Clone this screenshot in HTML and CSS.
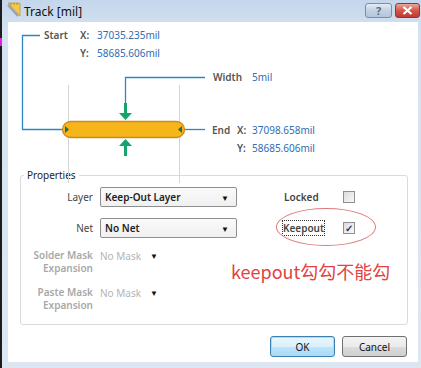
FILE: index.html
```html
<!DOCTYPE html>
<html lang="en">
<head>
    <meta charset="UTF-8">
    <title>Track [mil]</title>
    <link rel="stylesheet" href="styles.css">
</head>
<body>
    <div class="edge-mark"></div>

    <!-- Dialog window -->
    <div class="window">
        <div class="titlebar">
            <svg class="title-icon" width="14" height="16" viewBox="0 0 14 16">
                <path d="M1 1 L13 1 L13 14 Z" fill="#f2c94c" stroke="#c99a2a" stroke-width="0.8"/>
                <path d="M1 3 L11 14" stroke="#9aa3ad" stroke-width="2.2"/>
                <path d="M4 1 V3 M7 1 V3 M10 1 V3" stroke="#b07d1a" stroke-width="0.8"/>
            </svg>
            <span class="title-text">Track [mil]</span>
            <div class="caption-buttons">
                <div class="cap-btn help">?</div>
                <div class="cap-btn close">
                    <svg width="11" height="9" viewBox="0 0 11 9">
                        <path d="M1.5 1 L9.5 8 M9.5 1 L1.5 8" stroke="#fff" stroke-width="2.2"/>
                    </svg>
                </div>
            </div>
        </div>

        <div class="client">
            <!-- Track diagram -->
            <div class="diagram">
                <svg class="diagram-lines" width="410" height="165" viewBox="0 0 410 165">
                    <g stroke="#d6d6d6" stroke-width="1">
                        <path d="M60.5 63 V161"/>
                        <path d="M171.5 63 V161"/>
                    </g>
                    <g stroke="#2d86c0" stroke-width="1.3" fill="none">
                        <path d="M32 13.5 H14.5 V107.5 H56"/>
                        <path d="M197 55.5 H117.5 V82"/>
                        <path d="M175 107.5 H197"/>
                    </g>
                    <rect x="54.5" y="99.5" width="122" height="16" rx="8" fill="#f6b519" stroke="#c98a2a" stroke-width="1.3"/>
                    <path d="M57 104 L61 107.5 L57 111 Z" fill="#1f6f5a"/>
                    <path d="M174 104 L170 107.5 L174 111 Z" fill="#1f6f5a"/>
                    <g fill="#18a36c" stroke="none">
                        <rect x="116" y="81" width="3" height="12"/>
                        <path d="M111 91 H124 L117.5 98 Z"/>
                        <rect x="116" y="123" width="3" height="11"/>
                        <path d="M111 124 H124 L117.5 117 Z"/>
                    </g>
                </svg>

                <div class="coords start-coords">
                    <span class="tag">Start</span>
                    <span class="axis">X:</span>
                    <span class="value">37035.235mil</span>
                    <span></span>
                    <span class="axis">Y:</span>
                    <span class="value">58685.606mil</span>
                </div>

                <div class="coords width-coords">
                    <span class="tag">Width</span>
                    <span class="value">5mil</span>
                </div>

                <div class="coords end-coords">
                    <span class="tag">End</span>
                    <span class="axis">X:</span>
                    <span class="value">37098.658mil</span>
                    <span></span>
                    <span class="axis">Y:</span>
                    <span class="value">58685.606mil</span>
                </div>
            </div>

            <!-- Properties -->
            <fieldset class="props">
                <legend>Properties</legend>
                <div class="props-grid">
                    <label class="field-label">Layer</label>
                    <div class="select bold">Keep-Out Layer<span class="arrow">&#9660;</span></div>
                    <span></span>
                    <label class="check-label">Locked</label>
                    <span class="checkbox"></span>

                    <label class="field-label">Net</label>
                    <div class="select bold">No Net<span class="arrow">&#9660;</span></div>
                    <span></span>
                    <label class="check-label"><span class="focus">Keepout</span></label>
                    <span class="checkbox checked">&#10003;</span>

                    <label class="field-label disabled">Solder Mask<br>Expansion</label>
                    <div class="flat-select">No Mask<span class="arrow">&#9660;</span></div>
                    <span></span><span></span><span></span>

                    <label class="field-label disabled">Paste Mask<br>Expansion</label>
                    <div class="flat-select">No Mask<span class="arrow">&#9660;</span></div>
                    <span></span><span></span><span></span>
                </div>
            </fieldset>

            <div class="actions">
                <button class="btn default">OK</button>
                <button class="btn">Cancel</button>
            </div>

            <!-- Annotation drawn on the screenshot -->
            <div class="note-ring"></div>
            <div class="note-text">keepout勾勾不能勾</div>
        </div>
    </div>
</body>
</html>
```

FILE: styles.css
```css
body {
    margin: 0;
    width: 421px;
    height: 368px;
    overflow: hidden;
    background-color: #1c1c1c;
    font-family: "Noto Sans", "Open Sans", sans-serif;
    font-size: 10px;
    color: #222;
    position: relative;
}

.edge-mark {
    position: absolute;
    left: 0;
    top: 38px;
    width: 2px;
    height: 8px;
    background-color: #e020e0;
}

.window {
    margin-left: 2px;
    width: 419px;
    height: 368px;
    background: linear-gradient(#c3d6ec, #d5e2f1 30px, #dde7f2);
    display: flex;
    flex-direction: column;
}

/* Title bar */
.titlebar {
    height: 22px;
    display: flex;
    align-items: center;
}

.title-icon {
    margin-left: 5px;
    margin-top: -2px;
}

.title-text {
    margin-left: 3px;
    font-size: 12px;
    color: #111;
}

.caption-buttons {
    margin-left: auto;
    margin-right: 1px;
    display: flex;
    gap: 3px;
    align-self: flex-start;
    margin-top: 3px;
}

.cap-btn {
    width: 25px;
    height: 15px;
    border: 1px solid #7c8ea5;
    border-radius: 3px;
    display: flex;
    align-items: center;
    justify-content: center;
    box-sizing: border-box;
}

.cap-btn.help {
    width: 27px;
    background: linear-gradient(#e4ecf5, #c2d1e3 50%, #b4c6dc);
    color: #596a80;
    font-weight: bold;
    font-size: 11px;
}

.cap-btn.close {
    background: linear-gradient(#e8a89a, #d2584a 50%, #c23a2c);
    border-color: #8e3a30;
}

/* Client area */
.client {
    margin: 0 3px 0 6px;
    height: 340px;
    background-color: #fff;
    position: relative;
    display: flex;
    flex-direction: column;
}

.diagram {
    height: 148px;
    position: relative;
}

.diagram-lines {
    position: absolute;
    left: 0;
    top: 0;
    overflow: visible;
}

.coords {
    position: absolute;
    display: grid;
    grid-auto-rows: 18px;
    align-items: center;
    line-height: 14px;
}

.start-coords {
    left: 36px;
    top: 4px;
    grid-template-columns: 36px 17px auto;
}

.width-coords {
    left: 205px;
    top: 46px;
    grid-template-columns: 39px auto;
}

.end-coords {
    left: 204px;
    top: 99px;
    grid-template-columns: 25px 15px auto;
}

.tag,
.axis {
    color: #555;
    font-weight: 600;
}

.value {
    color: #2f6db4;
}

/* Properties group */
.props {
    margin: -2px 0 0 12px;
    width: 388px;
    height: 157px;
    box-sizing: border-box;
    border: 1px solid #dadada;
    border-radius: 3px;
    padding: 5px 0 0 0;
}

.props legend {
    margin-left: 3px;
    padding: 0 3px;
    color: #222;
    line-height: 14px;
}

.props-grid {
    display: grid;
    grid-template-columns: 72px 137px 33px 52px 13px;
    grid-template-rows: 20px 20px 26px 26px;
    column-gap: 7px;
    row-gap: 11px;
    align-items: center;
}

.field-label {
    text-align: right;
    color: #444;
    line-height: 13px;
}

.field-label.disabled {
    color: #a8a8a8;
    font-weight: 600;
}

.select {
    height: 20px;
    box-sizing: border-box;
    border: 1px solid #8e8f8f;
    border-radius: 2px;
    background: linear-gradient(#fafafa, #f0f0f0);
    padding-left: 4px;
    display: flex;
    align-items: center;
    color: #222;
}

.select.bold {
    font-weight: 600;
}

.select .arrow,
.flat-select .arrow {
    margin-left: auto;
    margin-right: 7px;
    font-size: 8px;
    color: #111;
}

.flat-select {
    color: #b4b4b4;
    display: flex;
    align-items: center;
    width: 58px;
    margin-top: -13px;
}

.flat-select .arrow {
    margin-right: 0;
}

.check-label {
    color: #444;
    font-weight: 600;
}

.check-label .focus {
    outline: 1px dotted #333;
    outline-offset: 0;
    margin-left: -1px;
}

.checkbox {
    width: 12px;
    height: 12px;
    box-sizing: border-box;
    border: 1px solid #8f8f8f;
    background: linear-gradient(135deg, #dcdcdc, #f8f8f8);
    display: flex;
    align-items: center;
    justify-content: center;
    font-size: 10px;
    line-height: 10px;
    color: #22347a;
    font-weight: bold;
}

/* Buttons */
.actions {
    display: flex;
    justify-content: flex-end;
    gap: 7px;
    margin: 11px 11px 0 0;
}

.btn {
    width: 65px;
    height: 21px;
    border: 1px solid #707070;
    border-radius: 3px;
    background: linear-gradient(#f3f3f3, #ebebeb 50%, #dcdcdc 51%, #cfcfcf);
    font-family: "Noto Sans", "Open Sans", sans-serif;
    font-size: 10px;
    color: #111;
    padding: 0;
}

.btn.default {
    border-color: #3c7fb1;
    box-shadow: inset 0 0 0 1px #a8dcf3;
    background: linear-gradient(#eaf6fd, #d9f0fc 50%, #bee6fd 51%, #a7d9f5);
}

/* Annotation */
.note-ring {
    position: absolute;
    left: 268px;
    top: 186px;
    width: 100px;
    height: 38px;
    border: 1px solid #e07a7a;
    border-radius: 50%;
    box-sizing: border-box;
}

.note-text {
    position: absolute;
    left: 223px;
    top: 236px;
    font-family: "Noto Sans CJK SC", sans-serif;
    font-size: 18px;
    color: #e2433f;
}
```
